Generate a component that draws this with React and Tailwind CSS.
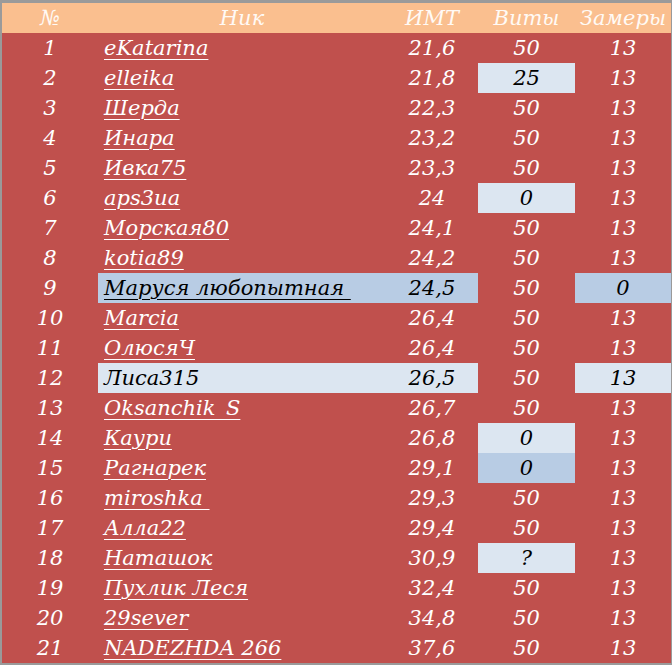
const rows = [
  [1, "eKatarina", "21,6", "50", "13"],
  [2, "elleika", "21,8", "25", "13"],
  [3, "Шерда", "22,3", "50", "13"],
  [4, "Инара", "23,2", "50", "13"],
  [5, "Ивка75", "23,3", "50", "13"],
  [6, "aps3ua", "24", "0", "13"],
  [7, "Морская80", "24,1", "50", "13"],
  [8, "kotia89", "24,2", "50", "13"],
  [9, "Маруся любопытная\u00a0", "24,5", "50", "0"],
  [10, "Marcia", "26,4", "50", "13"],
  [11, "ОлюсяЧ", "26,4", "50", "13"],
  [12, "Лиса315", "26,5", "50", "13"],
  [13, "Oksanchik_S", "26,7", "50", "13"],
  [14, "Каури", "26,8", "0", "13"],
  [15, "Рагнарек", "29,1", "0", "13"],
  [16, "miroshka\u00a0", "29,3", "50", "13"],
  [17, "Алла22", "29,4", "50", "13"],
  [18, "Наташок", "30,9", "?", "13"],
  [19, "Пухлик Леся", "32,4", "50", "13"],
  [20, "29sever", "34,8", "50", "13"],
  [21, "NADEZHDA 266", "37,6", "50", "13"],
];

// cell highlights: light = #dce6f1, dark = #b8cce4
const nickHl = { 9: "dark", 12: "light" };
const vitHl = { 2: "light", 6: "light", 14: "light", 15: "dark", 18: "light" };
const zamHl = { 9: "dark", 12: "light" };

const hlClass = (kind) =>
  kind === "dark"
    ? "bg-[#b8cce4] text-black"
    : kind === "light"
    ? "bg-[#dce6f1] text-black"
    : "text-white";

const Row = ({ row }) => {
  const [n, nick, bmi, vit, zam] = row;
  const nk = nickHl[n];
  return (
    <div className="grid grid-cols-[96px_288px_92px_97px_96px] h-[30px] items-stretch">
      <div className="flex items-center justify-center text-white">{n}</div>
      <div className={`col-span-2 grid grid-cols-[288px_92px] ${nk ? hlClass(nk) : "text-white"}`}>
        <div className="flex items-center pl-[6px] whitespace-nowrap">
          <span className={n === 12 ? "" : "underline underline-offset-[4px] decoration-1"}>{nick}</span>
        </div>
        <div className="flex items-center justify-center">{bmi}</div>
      </div>
      <div className={`flex items-center justify-center ${hlClass(vitHl[n])}`}>{vit}</div>
      <div className={`flex items-center justify-center ${hlClass(zamHl[n])}`}>{zam}</div>
    </div>
  );
};

export default function App() {
  return (
    <div
      className="w-[672px] h-[665px] bg-[#c0504d] border-t-[3px] border-l-2 border-r border-b-2 border-[#9a9a9a] overflow-hidden italic text-[21px] leading-none"
      style={{ fontFamily: '"DejaVu Serif", serif' }}
    >
      <div className="grid grid-cols-[96px_288px_92px_97px_96px] h-[30px] bg-[#fabf8f] text-[#fffaf5] text-[21px]">
        <div className="flex items-center justify-center">№</div>
        <div className="flex items-center justify-center">Ник</div>
        <div className="flex items-center justify-center">ИМТ</div>
        <div className="flex items-center justify-center">Виты</div>
        <div className="flex items-center justify-center whitespace-nowrap">Замеры</div>
      </div>
      {rows.map((r) => (
        <Row key={r[0]} row={r} />
      ))}
    </div>
  );
}
